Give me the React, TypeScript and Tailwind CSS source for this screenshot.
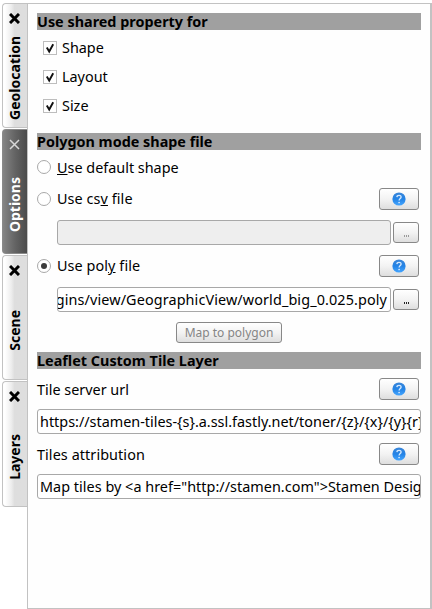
import { useId, type ReactNode } from "react";

type TabProps = { label: string; active?: boolean; tabClass: string; textClass: string };

function SideTab({ label, active = false, tabClass, textClass }: TabProps) {
  return (
    <div
      className={`flex w-[25px] flex-col items-center rounded-l-[4px] border border-r-0 ${tabClass} ${
        active
          ? "border-[#8a8a8a] bg-linear-to-r from-[#858585] via-[#646464] to-[#4b4b4b] text-white"
          : "border-[#c2c2c2] bg-linear-to-r from-white from-8% via-[#eeeeee] via-34% to-[#dedede] to-48% text-black"
      }`}
    >
      <svg viewBox="0 0 11 11" className="mt-[9px] mr-[2px] h-[11px] w-[11px] shrink-0">
        <path
          d="M1 1L10 10M10 1L1 10"
          fill="none"
          stroke={active ? "#d8d8d8" : "#000"}
          strokeWidth={active ? 1.5 : 3}
        />
      </svg>
      <span
        className={`mt-auto rotate-180 whitespace-nowrap text-[14px] leading-[18px] font-bold [writing-mode:vertical-rl] ${textClass}`}
      >
        {label}
      </span>
    </div>
  );
}

function SectionTitle({ children }: { children: ReactNode }) {
  return (
    <h2 className="h-[17px] w-[384px] whitespace-nowrap bg-[#a0a0a0] text-[14.4px] leading-[17px] font-bold">
      {children}
    </h2>
  );
}

function CheckRow({ label }: { label: string }) {
  return (
    <label className="flex h-[29px] items-center gap-[5px] pl-[6px]">
      <span className="h-[14px] w-[14px] border border-[#bdbdbd] bg-white">
        <svg viewBox="0 0 12 12" className="h-[12px] w-[12px]">
          <path d="M2.8 5.6L5.2 9.5L9.2 2.2" fill="none" stroke="#111" strokeWidth="1.9" />
        </svg>
      </span>
      <span>{label}</span>
    </label>
  );
}

function Radio({ on = false }: { on?: boolean }) {
  return (
    <span className="-mt-px flex h-[14px] w-[14px] shrink-0 items-center justify-center rounded-full border border-[#a9a9a9] bg-white">
      {on && <span className="h-[6px] w-[6px] rounded-full bg-[#3b3b3b]" />}
    </span>
  );
}

const buttonFace =
  "flex shrink-0 items-center justify-center rounded-[3px] border border-[#888] bg-linear-to-b from-white via-[#f3f3f3] via-50% to-[#dedede]";

function HelpButton() {
  const id = useId();
  return (
    <button className={`${buttonFace} mr-[2px] ml-auto h-[22px] w-[40px]`}>
      <svg viewBox="0 0 14 14" className="h-[14px] w-[14px]">
        <defs>
          <linearGradient id={id} x1="0" y1="0" x2="0" y2="1">
            <stop offset="0" stopColor="#3b86d8" />
            <stop offset="0.5" stopColor="#2383e6" />
            <stop offset="1" stopColor="#45a6ff" />
          </linearGradient>
        </defs>
        <circle cx="7" cy="7" r="6.6" fill={`url(#${id})`} />
        <path
          d="M4.9 5.1C5 2.7 9.2 2.7 9.1 5.1C9 6.5 7.1 6.7 7.1 8.5"
          fill="none"
          stroke="#d6eaff"
          strokeWidth="1.3"
        />
        <circle cx="7.1" cy="10.5" r="0.85" fill="#d6eaff" />
      </svg>
    </button>
  );
}

function DotsButton({ disabled = false }: { disabled?: boolean }) {
  return (
    <button className={`${buttonFace} h-[21px] w-[26px] gap-[1px] pt-[6px]`}>
      {[0, 1, 2].map((i) => (
        <span key={i} className={`h-[2px] w-[1px] ${disabled ? "bg-[#999]" : "bg-[#222]"}`} />
      ))}
    </button>
  );
}

const field =
  "flex h-[25px] items-center overflow-hidden whitespace-nowrap rounded-[3px] border border-[#a8a8a8]";

export default function App() {
  return (
    <div className="flex h-[609px] w-[432px] overflow-hidden bg-white pt-[3px] pl-[2px] font-['Noto_Sans',sans-serif] text-[14.4px] leading-[18px] text-black">
      <nav className="flex w-[25px] shrink-0 flex-col gap-px">
        <SideTab label="Geolocation" tabClass="h-[125px]" textClass="mb-[7px]" />
        <SideTab label="Options" active tabClass="h-[125px]" textClass="mb-[21px]" />
        <SideTab label="Scene" tabClass="h-[125px]" textClass="mb-[28px]" />
        <SideTab label="Layers" tabClass="h-[126px]" textClass="mb-[26px]" />
      </nav>
      <main className="flex h-[606px] w-[405px] shrink-0 flex-col border border-r-2 border-[#c2c2c2] bg-[#fefefe] pt-[9px] pr-[9px] pl-[9px]">
        <SectionTitle>Use shared property for</SectionTitle>
        <div className="flex h-[103px] flex-col pt-[3px]">
          <CheckRow label="Shape" />
          <CheckRow label="Layout" />
          <CheckRow label="Size" />
        </div>
        <SectionTitle>Polygon mode shape file</SectionTitle>
        <label className="flex h-[35px] items-center gap-[6px]">
          <Radio />
          <span><u>U</u>se default shape</span>
        </label>
        <div className="mt-[3px] flex h-[22px] items-center gap-[6px]">
          <Radio />
          <span className="tracking-[0.08px]">Use cs<u>v</u> file</span>
          <HelpButton />
        </div>
        <div className="mt-[10px] flex items-center gap-[2px] pl-[20px]">
          <div className={`${field} w-[334px] bg-[#eee]`} />
          <DotsButton disabled />
        </div>
        <div className="mt-[10px] flex h-[22px] items-center gap-[6px]">
          <Radio on />
          <span className="tracking-[0.08px]">Use pol<u>y</u> file</span>
          <HelpButton />
        </div>
        <div className="mt-[10px] flex items-center gap-[2px] pl-[20px]">
          <div className={`${field} w-[334px] justify-end bg-white pr-[3px]`}>
            <span className="tracking-[0.11px]">gins/view/GeographicView/world_big_0.025.poly</span>
          </div>
          <DotsButton />
        </div>
        <button className={`${buttonFace} mt-[10px] ml-[139px] h-[21px] w-[106px] text-[12px] text-[#858585]`}>
          Map to polygon
        </button>
        <div className="mt-[9px]">
          <SectionTitle>Leaflet Custom Tile Layer</SectionTitle>
        </div>
        <div className="mt-[9px] flex h-[22px] items-center">
          <span className="pt-[2px]">Tile server url</span>
          <HelpButton />
        </div>
        <div className={`${field} mt-[9px] w-[384px] bg-white pl-[2px]`}>
          <span className="pt-px">{"https://stamen-tiles-{s}.a.ssl.fastly.net/toner/{z}/{x}/{y}{r}"}</span>
        </div>
        <div className="mt-[9px] flex h-[22px] items-center">
          <span className="pt-[2px] tracking-[0.08px]">Tiles attribution</span>
          <HelpButton />
        </div>
        <div className={`${field} mt-[9px] w-[384px] bg-white pl-[2px]`}>
          <span className="pt-px tracking-[0.03px]">{'Map tiles by <a href="http://stamen.com">Stamen Design'}</span>
        </div>
      </main>
    </div>
  );
}
